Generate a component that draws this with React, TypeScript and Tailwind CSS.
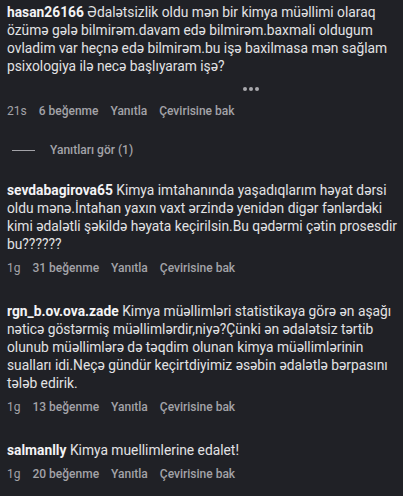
import React from "react";

type Comment = {
  user: string;
  lines: string[];
  time: string;
  likes: string;
  more?: boolean;
  replies?: number;
};

const comments: Comment[] = [
  {
    user: "hasan26166",
    lines: [
      "Ədalətsizlik oldu mən bir kimya müəllimi olaraq",
      "özümə gələ bilmirəm.davam edə bilmirəm.baxmali oldugum",
      "ovladim var heçnə edə bilmirəm.bu işə baxilmasa mən sağlam",
      "psixologiya ilə necə başlıyaram işə?",
    ],
    time: "21s",
    likes: "6 beğenme",
    more: true,
    replies: 1,
  },
  {
    user: "sevdabagirova65",
    lines: [
      "Kimya imtahanında yaşadıqlarım həyat dərsi",
      "oldu mənə.İntahan yaxın vaxt ərzində yenidən digər fənlərdəki",
      "kimi ədalətli şəkildə həyata keçirilsin.Bu qədərmi çətin prosesdir",
      "bu??????",
    ],
    time: "1g",
    likes: "31 beğenme",
  },
  {
    user: "rgn_b.ov.ova.zade",
    lines: [
      "Kimya müəllimləri statistikaya görə ən aşağı",
      "nəticə göstərmiş müəllimlərdir,niyə?Çünki ən ədalətsiz tərtib",
      "olunub müəllimlərə də təqdim olunan kimya müəllimlərinin",
      "sualları idi.Neçə gündür keçirtdiyimiz əsəbin ədalətlə bərpasını",
      "tələb edirik.",
    ],
    time: "1g",
    likes: "13 beğenme",
  },
  {
    user: "salmanlly",
    lines: ["Kimya muellimlerine edalet!"],
    time: "1g",
    likes: "20 beğenme",
  },
];

function CommentItem({ c }: { c: Comment }) {
  return (
    <div className="flex flex-col">
      <p className="text-[13.8px] leading-[18px] text-[#e2e2e4] whitespace-nowrap">
        <span className="font-bold text-[#f3f3f5]">{c.user}</span>{" "}
        {c.lines.map((l, i) => (
          <React.Fragment key={i}>
            {i > 0 && <br />}
            {l}
          </React.Fragment>
        ))}
      </p>
      {c.more && (
        <div className="flex gap-[2px] pl-[236px] mt-[12px] h-[4px]">
          <span className="w-[4px] h-[4px] rounded-full bg-[#a8a8ad]" />
          <span className="w-[4px] h-[4px] rounded-full bg-[#a8a8ad]" />
          <span className="w-[4px] h-[4px] rounded-full bg-[#a8a8ad]" />
        </div>
      )}
      <div
        className={`flex items-center gap-[12px] text-[12px] leading-[18px] text-[#a3a3a8] ${
          c.more ? "mt-[11px]" : "mt-[6px]"
        }`}
      >
        <span>{c.time}</span>
        <span className="font-medium">{c.likes}</span>
        <span className="font-medium">Yanıtla</span>
        <span className="font-medium">Çevirisine bak</span>
      </div>
      {c.replies ? (
        <div className="flex items-center mt-[21px] mb-[-3px] pl-[5px] text-[12px] leading-[18px] text-[#a3a3a8] font-medium">
          <span className="w-[23px] h-px bg-[#a3a3a8]" />
          <span className="ml-[15px]">Yanıtları gör ({c.replies})</span>
        </div>
      ) : null}
    </div>
  );
}

export default function App() {
  return (
    <div
      className="w-[403px] h-[496px] bg-[#202126] px-[7px] pt-[3px] flex flex-col gap-[25px] overflow-hidden"
      style={{ fontFamily: 'Roboto, "Noto Sans", sans-serif' }}
    >
      {comments.map((c) => (
        <CommentItem key={c.user} c={c} />
      ))}
    </div>
  );
}
